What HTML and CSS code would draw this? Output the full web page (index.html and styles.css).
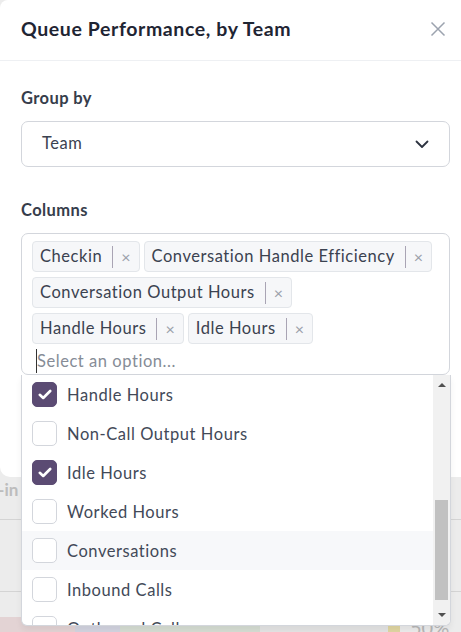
FILE: index.html
```html
<!DOCTYPE html>
<html>
<head>
<meta charset="utf-8">
<link rel="stylesheet" href="styles.css">
</head>
<body>
<div class="page">
  <div class="bg-spacer"></div>
  <div class="bg-row first"><span class="bg-text">Log-in</span></div>
  <div class="bg-row tall"></div>
  <div class="bg-row short"></div>
  <div class="bg-strip">
    <span class="c1"></span><span class="c2"></span><span class="c3"></span><span class="c4"></span>
    <span class="c5"></span><span class="c6">50%</span>
  </div>
</div>
<div class="overlay"></div>

<div class="modal">
  <div class="modal-header">
    <h2 class="title">Queue Performance, by Team</h2>
    <svg class="close" width="16" height="16" viewBox="0 0 16 16"><path d="M1.5 1.5L14.5 14.5M14.5 1.5L1.5 14.5" stroke="#9ca3af" stroke-width="1.5" fill="none"/></svg>
  </div>
  <div class="modal-body">
    <div class="label">Group by</div>
    <div class="select">
      <span>Team</span>
      <svg width="14" height="9" viewBox="0 0 14 9"><path d="M1.5 1.5L7 7L12.5 1.5" stroke="#2d3340" stroke-width="1.8" fill="none" stroke-linecap="round" stroke-linejoin="round"/></svg>
    </div>
    <div class="label columns">Columns</div>
    <div class="multi">
      <div class="tags">
        <span class="tag"><span class="tag-text">Checkin</span><span class="tag-x">×</span></span>
        <span class="tag"><span class="tag-text">Conversation Handle Efficiency</span><span class="tag-x">×</span></span>
        <span class="tag"><span class="tag-text">Conversation Output Hours</span><span class="tag-x">×</span></span>
        <span class="tag"><span class="tag-text">Handle Hours</span><span class="tag-x">×</span></span>
        <span class="tag"><span class="tag-text">Idle Hours</span><span class="tag-x">×</span></span>
      </div>
      <div class="placeholder"><span class="caret"></span>Select an option...</div>
    </div>
  </div>
</div>

<div class="dropdown">
  <div class="options">
    <div class="option"><span class="cb checked"><svg width="14" height="11" viewBox="0 0 14 11"><path d="M1.8 5.8L5.2 9L12.2 2" stroke="#fff" stroke-width="2.6" fill="none" stroke-linecap="round" stroke-linejoin="round"/></svg></span>Handle Hours</div>
    <div class="option"><span class="cb"></span>Non-Call Output Hours</div>
    <div class="option"><span class="cb checked"><svg width="14" height="11" viewBox="0 0 14 11"><path d="M1.8 5.8L5.2 9L12.2 2" stroke="#fff" stroke-width="2.6" fill="none" stroke-linecap="round" stroke-linejoin="round"/></svg></span>Idle Hours</div>
    <div class="option"><span class="cb"></span>Worked Hours</div>
    <div class="option hover"><span class="cb"></span>Conversations</div>
    <div class="option"><span class="cb"></span>Inbound Calls</div>
    <div class="option"><span class="cb"></span>Outbound Calls</div>
  </div>
  <div class="scrollbar">
    <span class="arrow up"></span>
    <span class="track"><span class="thumb"></span></span>
    <span class="arrow down"></span>
  </div>
</div>
</body>
</html>
```

FILE: styles.css
```css
* { box-sizing: border-box; }
html, body { margin: 0; padding: 0; }
body {
  width: 461px;
  height: 632px;
  overflow: hidden;
  position: relative;
  background: #fff;
  font-family: Lato, "Open Sans", sans-serif;
}

/* background page */
.page { display: flex; flex-direction: column; }
.bg-spacer { height: 477px; }
.bg-row { border-bottom: 1px solid #e6e6e6; height: 43px; display: flex; align-items: center; }
.bg-row.first { align-items: flex-start; padding-top: 1px; }
.bg-row.tall { height: 72px; }
.bg-row.short { height: 25px; border-bottom: none; }
.bg-text { margin-left: -29px; color: #cdcdcd; font-size: 17px; line-height: 24px; font-weight: 700; }
.bg-strip { display: flex; height: 20px; }
.bg-strip span { display: block; height: 20px; }
.c1 { width: 75px; background: #f6e4e6; }
.c2 { width: 45px; background: #e4e6f2; }
.c3 { width: 140px; background: #e8efe4; }
.c4 { width: 128px; background: #f7f7f7; }
.c5 { width: 12px; background: #f3e8b0; margin-right: 10px; }
.c6 { color: #c6c6c6; font-size: 20px; line-height: 24px; margin-top: -2px; }

.overlay { position: absolute; inset: 0; background: rgba(0,0,0,0.075); }

/* modal */
.modal {
  position: absolute;
  top: 0; left: 0;
  width: 461px;
  height: 477px;
  background: #fff;
  border-radius: 8px 0 0 10px;
}
.modal-header {
  height: 61px;
  display: flex;
  align-items: center;
  justify-content: space-between;
  padding: 0 15px 0 21px;
  border-bottom: 1px solid #eef0f3;
}
.title {
  margin: 0 0 3px 0;
  font-size: 19.5px;
  font-weight: 700;
  color: #1f2533;
  letter-spacing: 0.6px;
}
.close { margin-bottom: 3px; }
.modal-body { padding: 25px 11px 0 21px; }
.label {
  font-size: 16.5px;
  line-height: 24px;
  font-weight: 700;
  color: #363d4b;
  letter-spacing: 0.4px;
  margin-bottom: 11px;
}
.label.columns { margin-top: 31px; }
.select {
  height: 46px;
  border: 1px solid #d3d6dc;
  border-radius: 7px;
  display: flex;
  align-items: center;
  justify-content: space-between;
  padding: 0 20px 0 20px;
  font-size: 16.5px;
  letter-spacing: 0.55px;
  color: #3b4250;
}
.select span { margin-top: -2px; }
.multi {
  height: 142px;
  border: 1px solid #d3d6dc;
  border-radius: 7px;
  padding: 7px 10px 0 10px;
}
.tags { display: flex; flex-wrap: wrap; gap: 5px 4px; }
.tag {
  display: flex;
  align-items: center;
  height: 31px;
  background: #f6f7f9;
  border: 1px solid #e3e6ea;
  border-radius: 4px;
  padding: 0 0 0 7px;
  font-size: 16.5px;
  letter-spacing: 0.55px;
  color: #3b4250;
}
.tag-text { margin-top: -2px; }
.tag-x {
  margin-left: 10px;
  border-left: 1px solid #a9a4b4;
  height: 22px;
  line-height: 21px;
  padding: 0 8px 0 8px;
  font-size: 16px;
  letter-spacing: 0;
  color: #9aa0aa;
}
.placeholder {
  margin-top: 5px;
  height: 24px;
  line-height: 24px;
  font-size: 16.5px;
  letter-spacing: 0.55px;
  color: #868c96;
  display: flex;
  align-items: center;
  padding-left: 4px;
}
.caret { width: 1px; height: 24px; background: #333; }

/* dropdown */
.dropdown {
  position: absolute;
  top: 375px;
  left: 21px;
  width: 430px;
  height: 251px;
  background: #fff;
  border: 1px solid #d3d6dc;
  border-top: none;
  border-radius: 0 0 6px 6px;
  box-shadow: 0 4px 6px rgba(0,0,0,0.06);
  display: flex;
  overflow: hidden;
}
.options { flex: 1; overflow: hidden; }
.option {
  height: 39px;
  display: flex;
  align-items: center;
  padding-left: 10px;
  font-size: 16.5px;
  letter-spacing: 0.55px;
  color: #424958;
}
.option.hover { background: #f7f8fa; }
.cb {
  width: 25px;
  height: 25px;
  border: 1px solid #d3d6dc;
  border-radius: 5px;
  background: #fff;
  margin-right: 10px;
  display: flex;
  align-items: center;
  justify-content: center;
  flex-shrink: 0;
}
.cb.checked { background: #5b4b73; border-color: #5b4b73; }
.scrollbar {
  width: 17px;
  background: #f1f1f1;
  display: flex;
  flex-direction: column;
  align-items: center;
}
.arrow { width: 0; height: 0; border-left: 4px solid transparent; border-right: 4px solid transparent; }
.arrow.up { border-bottom: 4px solid #505050; margin: 8px 0 0 0; }
.arrow.down { border-top: 4px solid #505050; margin: 0 0 8px 0; }
.track { flex: 1; width: 100%; display: flex; flex-direction: column; padding: 113px 2px 0 2px; }
.thumb { height: 100px; background: #c1c1c1; }
```
